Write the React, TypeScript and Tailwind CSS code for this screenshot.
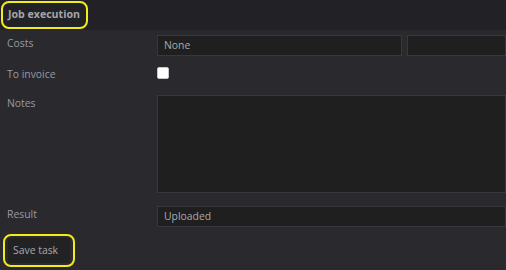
import React from "react";

export default function App() {
  return (
    <div
      className="w-[506px] h-[270px] overflow-hidden bg-[#29292e] text-[10.4px] text-[#9a9a9e] flex flex-col"
      style={{ fontFamily: '"Open Sans", "Noto Sans", sans-serif' }}
    >
      <div className="h-[30px] shrink-0 bg-[#222226] flex items-center pl-[1px]">
        <div className="h-[28px] w-[87px] pl-[5px] flex items-center rounded-[8px] border-2 border-[#f2ec1c]">
          <span className="font-bold text-[#a5a5a8] text-[10.6px]">Job execution</span>
        </div>
      </div>
      <div className="flex h-[30px] pt-[5px]">
        <div className="w-[157px] pl-[7px] pt-[1px]">Costs</div>
        <div className="flex flex-1 gap-[5px]">
          <div className="w-[245px] h-[21px] bg-[#1f1f1f] border border-[#38383a] flex items-center px-[6px] text-[#a9a9ab]">None</div>
          <div className="flex-1 h-[21px] bg-[#1f1f1f] border border-[#38383a]"></div>
        </div>
      </div>
      <div className="flex h-[35px] pt-[7px]">
        <div className="w-[157px] pl-[7px]">To invoice</div>
        <div>
          <div className="w-[12px] h-[12px] bg-white rounded-[2px] border border-[#c8c8c8]"></div>
        </div>
      </div>
      <div className="flex h-[111px]">
        <div className="w-[157px] pl-[7px] pt-[1px]">Notes</div>
        <div className="flex-1 h-[98px] bg-[#1f1f1f] border border-[#38383a]"></div>
      </div>
      <div className="flex h-[28px]">
        <div className="w-[157px] pl-[7px] pt-[1px]">Result</div>
        <div className="flex-1 h-[21px] bg-[#1f1f1f] border border-[#38383a] flex items-center px-[6px] text-[#a9a9ab]">Uploaded</div>
      </div>
      <div className="pl-[3px]">
        <div className="w-[72px] h-[33px] rounded-[8px] border-2 border-[#f2ec1c] flex items-center pl-[3px]">
          <div className="h-[25px] w-[62px] bg-[#222224] flex items-center pl-[5px] text-[#a9a9ab]">Save task</div>
        </div>
      </div>
    </div>
  );
}
